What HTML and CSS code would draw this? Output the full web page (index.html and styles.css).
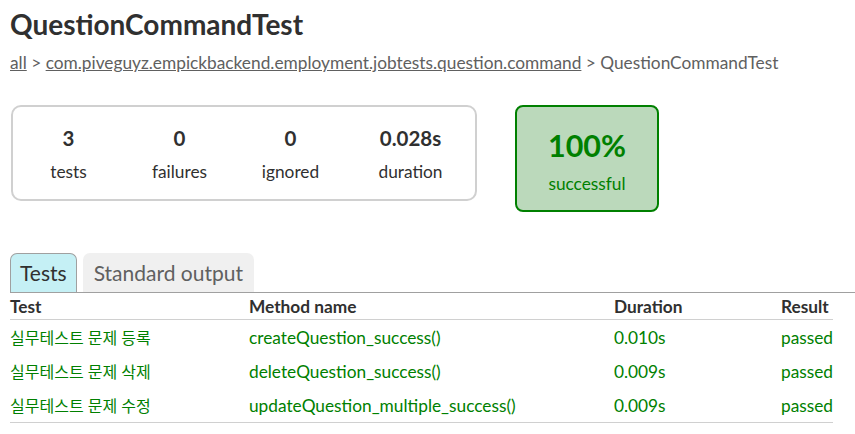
FILE: index.html
```html
<!DOCTYPE html>
<html lang="ko">
<head>
<meta charset="utf-8">
<title>QuestionCommandTest</title>
<link rel="stylesheet" href="styles.css">
</head>
<body>
<div class="content">
  <h1 class="title">QuestionCommandTest</h1>
  <div class="breadcrumbs">
    <a href="#">all</a> &gt; <a href="#">com.piveguyz.empickbackend.employment.jobtests.question.command</a> &gt; QuestionCommandTest
  </div>
  <div class="summary">
    <div class="summary-group">
      <div class="info-box"><div class="counter">3</div><div class="label">tests</div></div>
      <div class="info-box"><div class="counter">0</div><div class="label">failures</div></div>
      <div class="info-box"><div class="counter">0</div><div class="label">ignored</div></div>
      <div class="info-box"><div class="counter">0.028s</div><div class="label">duration</div></div>
    </div>
    <div class="success-rate">
      <div class="percent">100%</div>
      <div class="label">successful</div>
    </div>
  </div>
  <div class="tabs">
    <div class="tab selected">Tests</div>
    <div class="tab">Standard output</div>
  </div>
  <table class="results">
    <thead>
      <tr><th class="c1">Test</th><th class="c2">Method name</th><th class="c3">Duration</th><th class="c4">Result</th></tr>
    </thead>
    <tbody>
      <tr><td class="ko">실무테스트 문제 등록</td><td>createQuestion_success()</td><td>0.010s</td><td>passed</td></tr>
      <tr><td class="ko">실무테스트 문제 삭제</td><td>deleteQuestion_success()</td><td>0.009s</td><td>passed</td></tr>
      <tr><td class="ko">실무테스트 문제 수정</td><td>updateQuestion_multiple_success()</td><td>0.009s</td><td>passed</td></tr>
    </tbody>
  </table>
</div>
</body>
</html>
```

FILE: styles.css
```css
html, body {
  margin: 0;
  padding: 0;
  background: #ffffff;
}
body {
  font-family: Lato, "Noto Sans CJK KR", sans-serif;
  font-size: 17.3px;
  color: #303030;
}
.content {
  padding: 6px 0 0 10px;
}
.title {
  margin: 0;
  font-size: 28px;
  line-height: 36px;
  font-weight: bold;
  color: #303030;
}
.breadcrumbs {
  margin-top: 10px;
  line-height: 22px;
  color: #606060;
}
.breadcrumbs a {
  color: #606060;
  text-decoration: underline;
}
.summary {
  display: flex;
  align-items: flex-start;
  margin-top: 31px;
  gap: 38px;
}
.summary-group {
  display: grid;
  grid-template-columns: 111px 111px 111px 129px;
  border: 2px solid #d0d0d0;
  border-radius: 10px;
  padding: 19px 0 16px;
  margin-left: 1px;
}
.info-box {
  text-align: center;
}
.counter {
  font-weight: bold;
  font-size: 20.5px;
  line-height: 24px;
  margin-bottom: 11px;
}
.label {
  line-height: 22px;
}
.success-rate {
  width: 140px;
  text-align: center;
  border: 2px solid #008000;
  border-radius: 8px;
  background: #bbd9bb;
  color: #008000;
  padding: 20px 0 15px;
}
.success-rate .percent {
  font-size: 30.5px;
  font-weight: bold;
  line-height: 36px;
  margin-bottom: 10px;
}
.tabs {
  display: flex;
  gap: 6px;
  margin-top: 41px;
  border-bottom: 1px solid #a0a0a0;
}
.tab {
  font-size: 21px;
  line-height: 39px;
  padding: 0 11px;
  border-radius: 7px 7px 0 0;
  background: #f0f0f0;
  color: #606060;
}
.tab.selected {
  background: #c5f0f5;
  color: #303030;
  border: 1px solid #a0a0a0;
  border-bottom: none;
  line-height: 38px;
  padding: 0 9px;
}
.results {
  border-collapse: collapse;
  width: 823px;
}
.results th {
  text-align: left;
  font-weight: bold;
  height: 26px;
  padding: 0;
  border-bottom: 1px solid #d0d0d0;
  vertical-align: middle;
}
.results td {
  padding: 0;
  height: 34px;
  color: #008000;
  vertical-align: middle;
}
.results td.ko {
  font-size: 16px;
}
.results tbody tr:last-child td {
  border-bottom: 1px solid #d0d0d0;
}
.c1 { width: 239px; }
.c2 { width: 365px; }
.c3 { width: 167px; }
```
